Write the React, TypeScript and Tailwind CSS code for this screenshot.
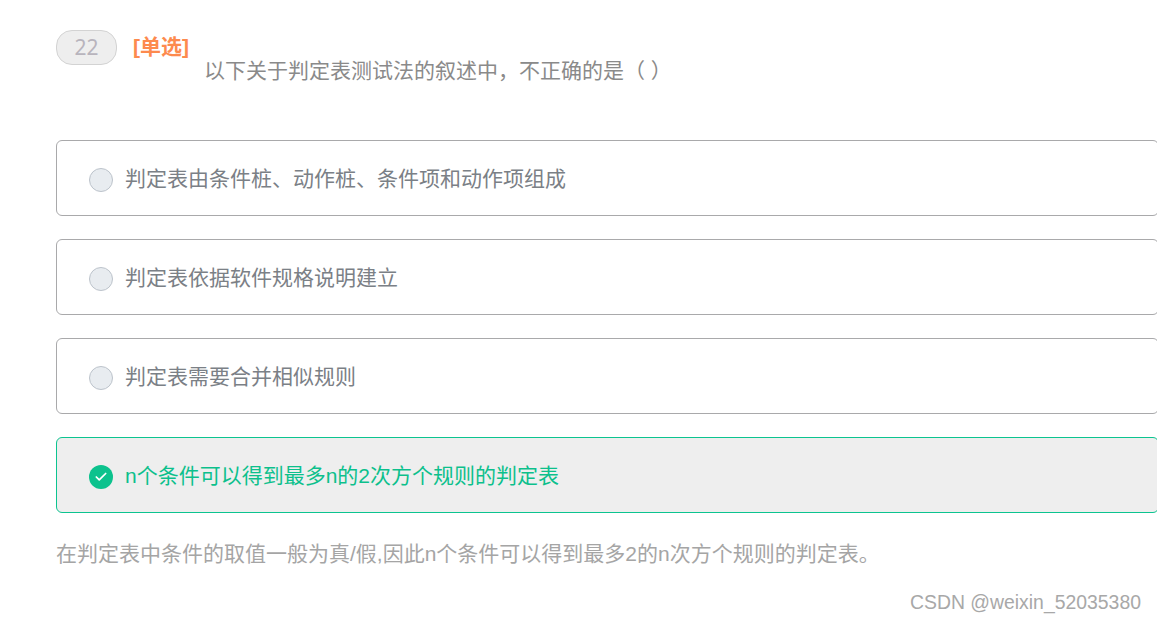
import React from "react";
import { Check } from "lucide-react";

const font = { fontFamily: '"Liberation Sans", "Noto Sans CJK SC", sans-serif' };

const options = [
  { text: "判定表由条件桩、动作桩、条件项和动作项组成" },
  { text: "判定表依据软件规格说明建立" },
  { text: "判定表需要合并相似规则" },
  { text: "n个条件可以得到最多n的2次方个规则的判定表", selected: true },
];

const Option = ({ text, selected }: { text: string; selected?: boolean }) => (
  <div
    className={
      selected
        ? "flex h-[76px] items-center rounded-[6px] border border-[#0cc490] bg-[#eeeeee] pl-[32px]"
        : "flex h-[76px] items-center rounded-[6px] border border-[#a9a9ab] bg-white pl-[32px]"
    }
  >
    {selected ? (
      <div className="mt-1 flex h-6 w-6 items-center justify-center rounded-full bg-[#0cc28d]">
        <Check size={14} strokeWidth={3} className="text-white" />
      </div>
    ) : (
      <div className="mt-1 h-6 w-6 rounded-full border border-[#bcc3cb] bg-[#e8ecf0]" />
    )}
    <span className={selected ? "ml-3 mt-px text-[21px] leading-[30px] text-[#0cc08c]" : "ml-3 mt-px text-[21px] leading-[30px] text-[#7b8086]"}>{text}</span>
  </div>
);

export default function App() {
  return (
    <div className="relative h-[621px] w-[1157px] overflow-hidden bg-white pl-[56px] pt-[30px]" style={font}>
      <div className="flex">
        <div
          className="flex h-[35px] w-[61px] items-center justify-center rounded-[16px] border border-[#d3d3d3] bg-[#eeeeee] text-[21px] text-[#b8b4bd]"
          style={{ fontFamily: '"Noto Sans", sans-serif' }}
        >
          22
        </div>
        <div className="ml-4 text-[21px] font-bold leading-[33px] text-[#fd8a4e]">[单选]</div>
        <div className="ml-[15px] mt-[27px] whitespace-pre text-[21px] leading-[27px] text-[#8a8a8a]">以下关于判定表测试法的叙述中，不正确的是（ ）</div>
      </div>
      <div className="mt-[56px] flex w-[1103px] flex-col gap-[23px]">
        {options.map((o) => (
          <Option key={o.text} text={o.text} selected={o.selected} />
        ))}
      </div>
      <div className="mt-[26px] text-[21px] leading-[30px] text-[#a5a5a5]">
        在判定表中条件的取值一般为真/假,因此n个条件可以得到最多2的n次方个规则的判定表。
      </div>
      <div className="absolute left-[910px] top-[590px] text-[19.4px] leading-[24px] text-[#a8a8a8]">CSDN @weixin_52035380</div>
    </div>
  );
}
